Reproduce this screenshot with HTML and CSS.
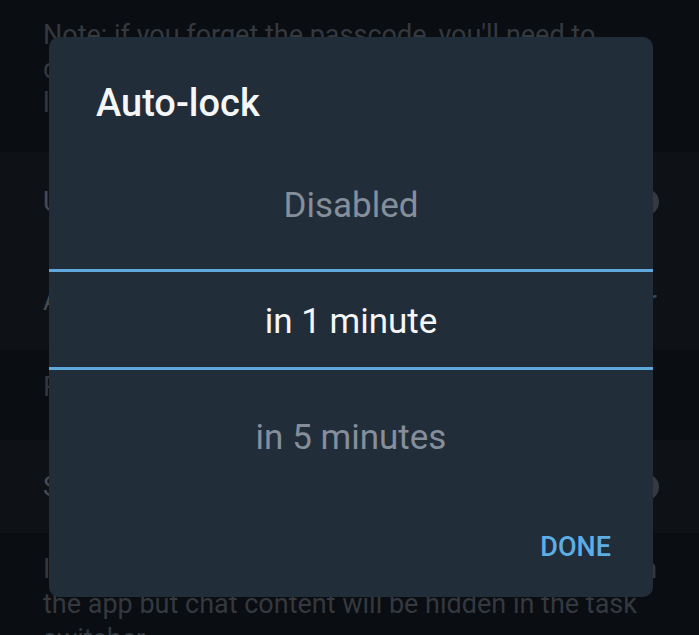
FILE: index.html
```html
<!DOCTYPE html>
<html lang="en">
<head>
    <meta charset="UTF-8">
    <meta name="viewport" content="width=device-width, initial-scale=1.0">
    <title>Passcode Lock</title>
    <link rel="stylesheet" href="styles.css">
</head>
<body>
    <div class="screen">
        <div class="hint hint-top">
            Note: if you forget the passcode, you'll need to delete and reinstall the app. All secret chats will be lost.
        </div>

        <div class="cell">
            <span class="cell-title">Unlock with Fingerprint</span>
            <span class="toggle"><span class="thumb"></span></span>
        </div>
        <div class="cell">
            <span class="cell-title">Auto-lock</span>
            <span class="cell-value">in 1 hour</span>
        </div>

        <div class="hint hint-mid">
            Require passcode if away for a time.
        </div>

        <div class="cell cell-short">
            <span class="cell-title">Show App Content in Task Switcher</span>
            <span class="toggle"><span class="thumb"></span></span>
        </div>

        <div class="hint hint-bottom">
            If disabled, you won't be able to take screenshots in the app but chat content will be hidden in the task switcher.
        </div>
    </div>

    <div class="dialog">
        <div class="dialog-title">Auto-lock</div>

        <div class="picker">
            <div class="picker-item item-above">Disabled</div>
            <div class="picker-line"></div>
            <div class="picker-item item-selected">in 1 minute</div>
            <div class="picker-line"></div>
            <div class="picker-item item-below">in 5 minutes</div>
        </div>

        <div class="dialog-buttons">
            <button class="btn-done">DONE</button>
        </div>
    </div>
</body>
</html>
```

FILE: styles.css
```css
html, body {
    margin: 0;
    padding: 0;
}
body {
    width: 699px;
    height: 635px;
    overflow: hidden;
    background-color: #0a0d11;
    font-family: Roboto, "Noto Sans", sans-serif;
}
.screen {
    width: 699px;
}
.hint {
    background-color: #0a0d11;
    color: #343940;
    font-size: 27px;
    line-height: 34px;
    padding: 0 36px 0 43px;
    box-sizing: border-box;
}
.hint-top {
    padding-top: 18px;
    height: 152px;
}
.hint-mid {
    height: 90px;
    padding-top: 20px;
    white-space: nowrap;
}
.hint-bottom {
    padding-top: 19px;
    line-height: 35px;
}
.cell {
    background-color: #0e1217;
    height: 99px;
    display: flex;
    align-items: center;
    justify-content: space-between;
    padding: 0 42px 0 43px;
    font-size: 27px;
    color: #464b52;
}
.cell-short {
    height: 93px;
}
.cell-value {
    color: #2f4a63;
}
.toggle {
    position: relative;
    width: 40px;
    height: 16px;
    border-radius: 8px;
    background-color: #22272d;
}
.thumb {
    position: absolute;
    right: -2px;
    top: -5px;
    width: 26px;
    height: 26px;
    border-radius: 50%;
    background-color: #353a41;
}

/* dialog over the dimmed page */
.dialog {
    position: absolute;
    left: 49px;
    top: 37px;
    width: 604px;
    height: 560px;
    background-color: #222d3a;
    border-radius: 10px;
    display: flex;
    flex-direction: column;
}
.dialog-title {
    padding: 44px 0 0 47px;
    height: 44px;
    font-size: 38px;
    line-height: 44px;
    font-weight: 500;
    color: #f4f6f8;
}
.picker {
    display: flex;
    flex-direction: column;
}
.picker-item {
    display: flex;
    justify-content: center;
    font-size: 35px;
    line-height: 40px;
    color: #848f9b;
    box-sizing: border-box;
}
.item-above {
    height: 144px;
    align-items: flex-end;
    padding-bottom: 43px;
}
.item-selected {
    height: 95px;
    align-items: center;
    padding-top: 5px;
    color: #f4f6f8;
}
.item-below {
    height: 110px;
    padding-top: 48px;
}
.picker-line {
    height: 3px;
    background-color: #5fa8dc;
}
.dialog-buttons {
    flex: 1;
    display: flex;
    justify-content: flex-end;
    align-items: flex-start;
    padding: 52px 42px 0 0;
}
.btn-done {
    background: none;
    border: none;
    padding: 0;
    font-family: Roboto, "Noto Sans", sans-serif;
    font-size: 27px;
    line-height: 30px;
    font-weight: 500;
    color: #5eaee6;
    cursor: pointer;
}
```
